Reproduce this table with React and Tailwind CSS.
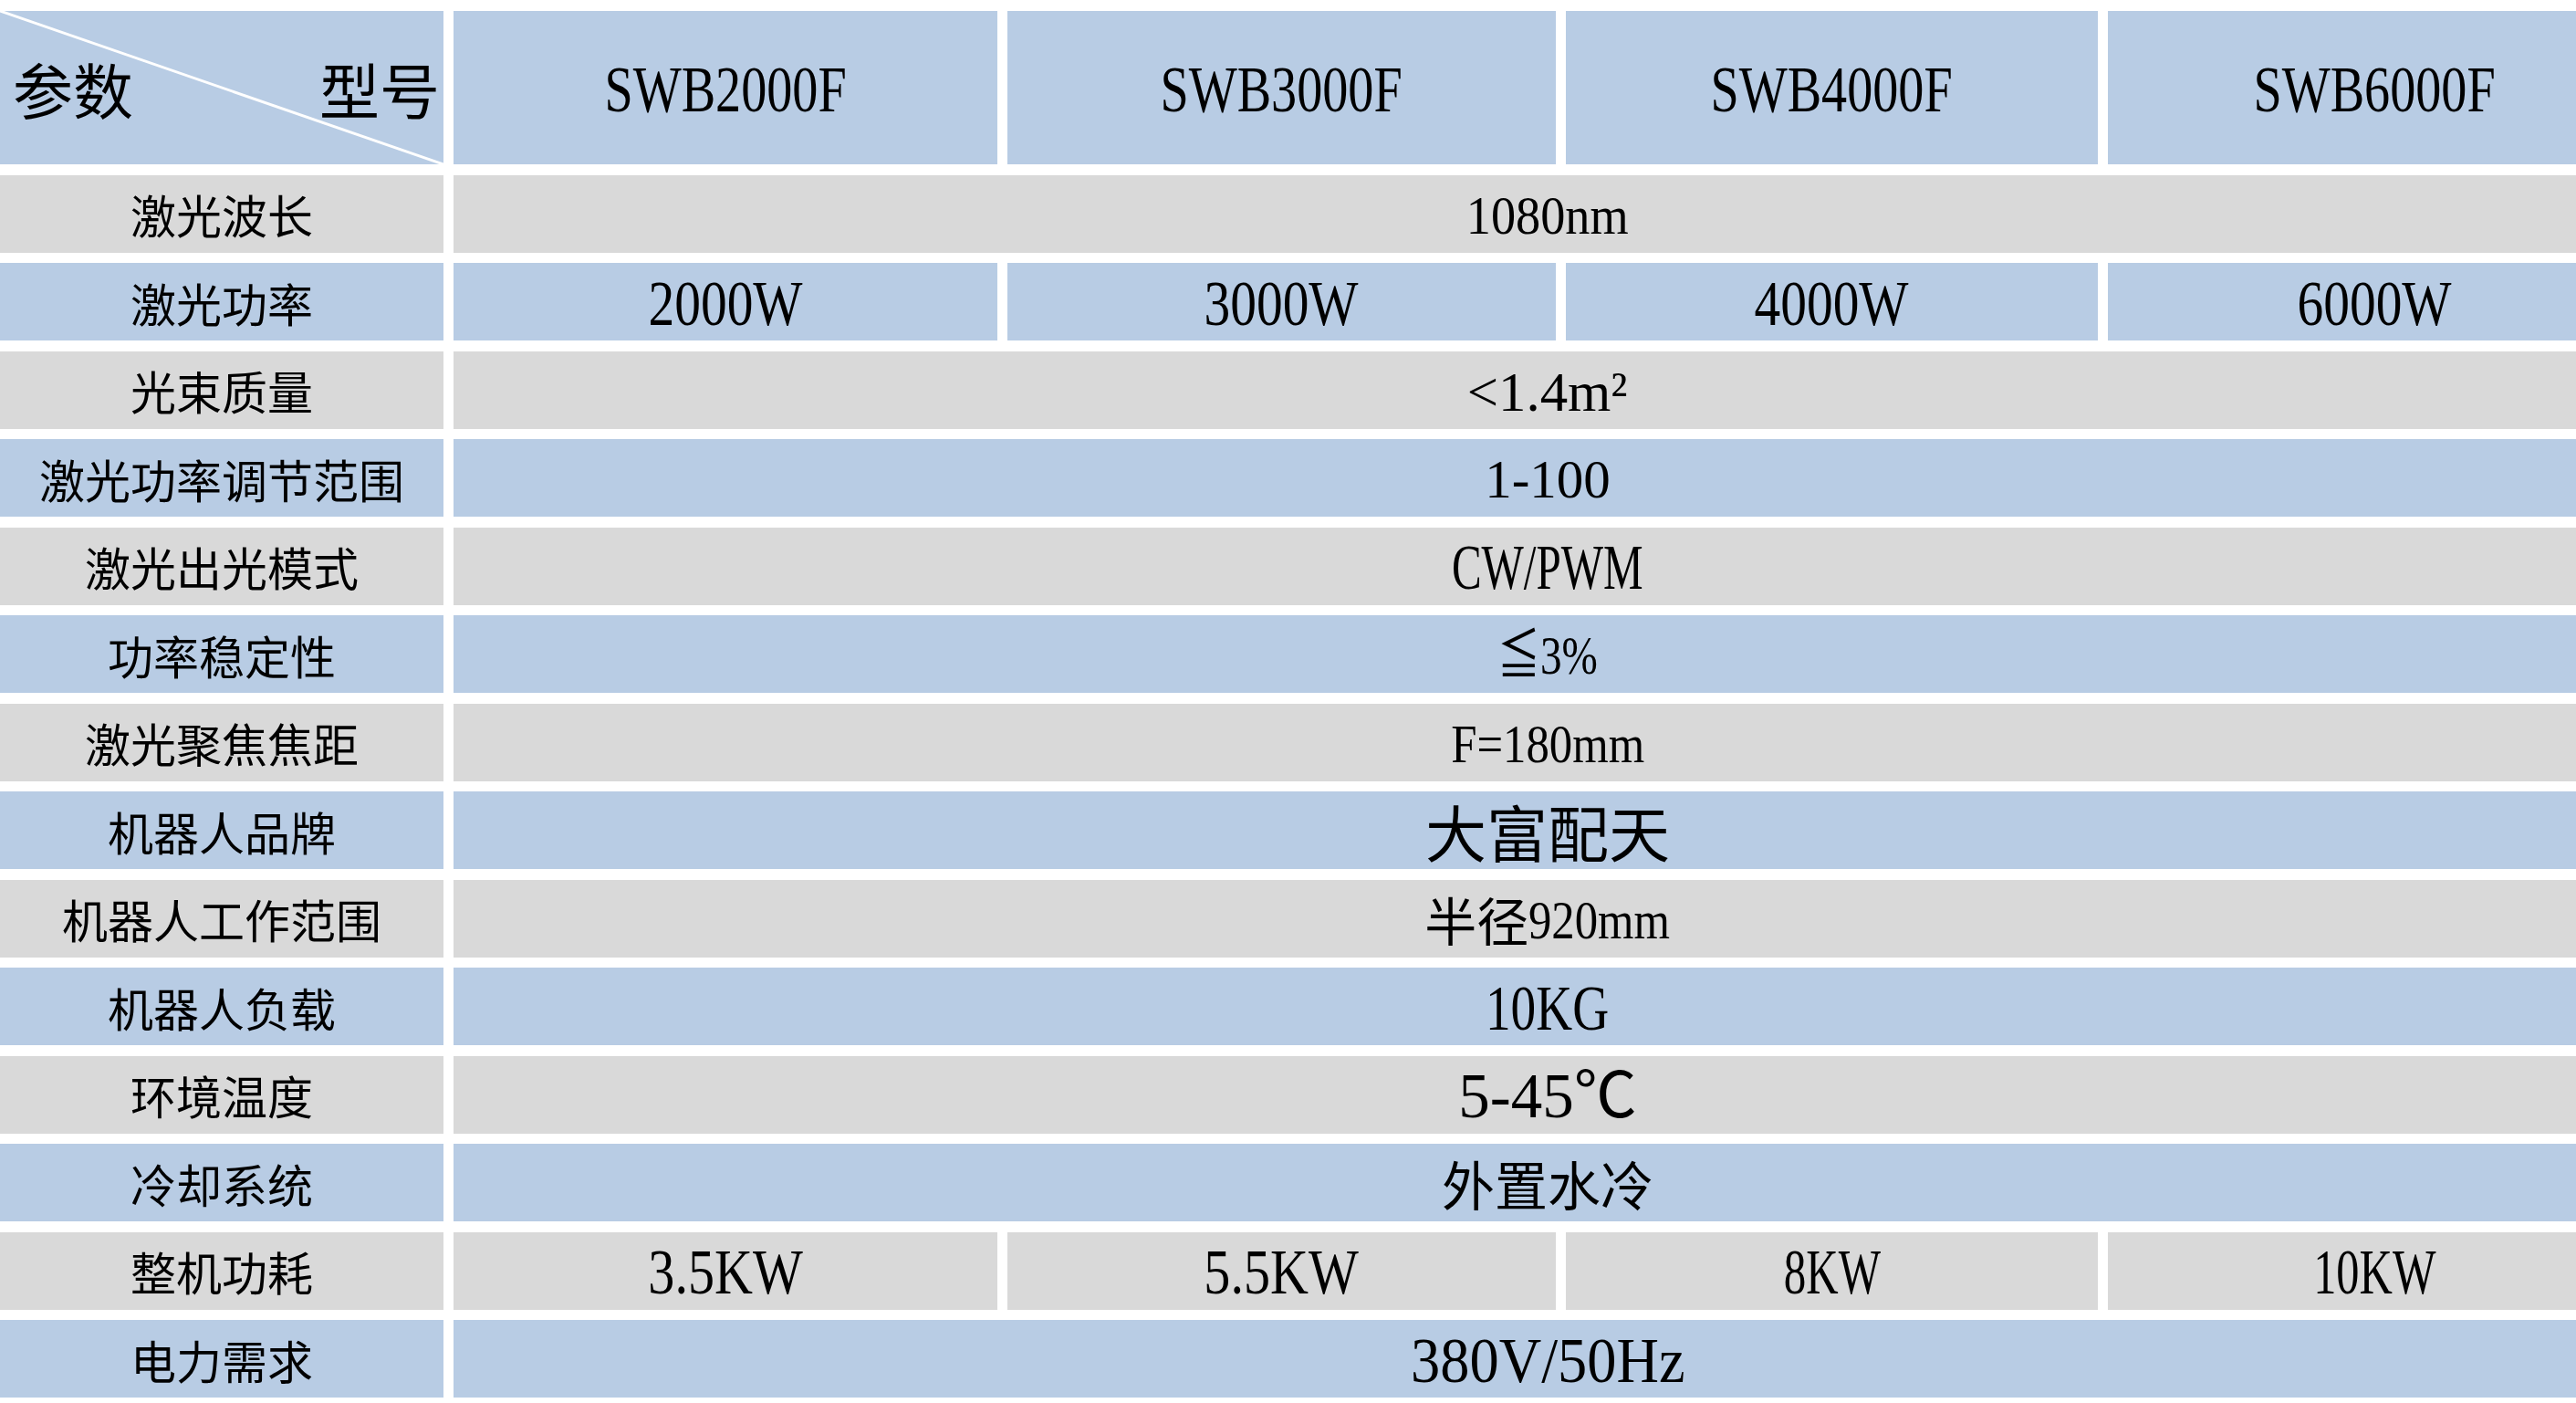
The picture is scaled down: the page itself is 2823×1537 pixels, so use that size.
import React from "react";

const serif = "font-['Liberation_Serif','Noto_Sans_CJK_SC',serif]";
const cjk = "font-['Noto_Sans_CJK_SC',sans-serif]";

function V({ c, children }) {
  return <span className={"inline-block whitespace-nowrap leading-none translate-y-[2px] " + serif + " " + c}>{children}</span>;
}

const models = ["SWB2000F", "SWB3000F", "SWB4000F", "SWB6000F"];

const rows = [
  { label: "激光波长", value: <V c="text-[59px] scale-x-[0.92]">1080nm</V> },
  {
    label: "激光功率",
    cols: [
      <V c="text-[70px] scale-x-[0.82]">2000W</V>,
      <V c="text-[70px] scale-x-[0.82]">3000W</V>,
      <V c="text-[70px] scale-x-[0.82]">4000W</V>,
      <V c="text-[70px] scale-x-[0.82]">6000W</V>,
    ],
  },
  { label: "光束质量", value: <V c="text-[62px] scale-x-[0.98]">{"<1.4m²"}</V> },
  { label: "激光功率调节范围", value: <V c="text-[59px]">1-100</V> },
  { label: "激光出光模式", value: <V c="text-[70px] scale-x-[0.7]">CW/PWM</V> },
  { label: "功率稳定性", value: <V c="text-[59px] scale-x-[0.8]">≦3%</V> },
  { label: "激光聚焦焦距", value: <V c="text-[59px] scale-x-[0.86]">F=180mm</V> },
  {
    label: "机器人品牌",
    value: <span className={"leading-none text-[67px] " + cjk}>大富配天</span>,
  },
  {
    label: "机器人工作范围",
    value: (
      <span className="flex items-center">
        <span className={"leading-none text-[57px] " + cjk}>半径</span>
        <V c="text-[59px] scale-x-[0.86] origin-left -mr-[25px]">920mm</V>
      </span>
    ),
  },
  { label: "机器人负载", value: <V c="text-[70px] scale-x-[0.79]">10KG</V> },
  { label: "环境温度", value: <V c="text-[69px]">5-45℃</V> },
  {
    label: "冷却系统",
    value: <span className={"leading-none text-[58px] " + cjk}>外置水冷</span>,
  },
  {
    label: "整机功耗",
    cols: [
      <V c="text-[70px] scale-x-[0.83]">3.5KW</V>,
      <V c="text-[70px] scale-x-[0.83]">5.5KW</V>,
      <V c="text-[70px] scale-x-[0.7]">8KW</V>,
      <V c="text-[70px] scale-x-[0.72]">10KW</V>,
    ],
  },
  { label: "电力需求", value: <V c="text-[70px] scale-x-[0.92]">380V/50Hz</V> },
];

export default function App() {
  return (
    <div className="w-[2823px] h-[1537px] overflow-hidden bg-white text-black">
      <div className="w-[2895px] pt-[12px] grid grid-cols-[486px_596px_601px_583px_585px] gap-x-[11px] gap-y-[11.5px]">
        {/* header */}
        <div className={"relative h-[168px] bg-[#b8cce4] flex items-center justify-between pl-[14px] pr-[4px] text-[66px] leading-none " + cjk}>
          <svg className="absolute inset-0 w-full h-full" viewBox="0 0 486 168" preserveAspectRatio="none">
            <line x1="0" y1="0" x2="486" y2="168" stroke="#ffffff" strokeWidth="3" />
          </svg>
          <span className="relative">参数</span>
          <span className="relative">型号</span>
        </div>
        {models.map((m) => (
          <div key={m} className="h-[168px] bg-[#b8cce4] flex items-center justify-center">
            <V c="text-[72px] scale-x-[0.78]">{m}</V>
          </div>
        ))}

        {rows.map((r, i) => {
          const bg = i % 2 === 0 ? "bg-[#d9d9d9]" : "bg-[#b8cce4]";
          return (
            <React.Fragment key={r.label}>
              <div className={"h-[85px] flex items-center justify-center " + bg}>
                <span className={"leading-none text-[50px] " + cjk}>{r.label}</span>
              </div>
              {r.cols ? (
                r.cols.map((c, j) => (
                  <div key={j} className={"h-[85px] flex items-center justify-center " + bg}>
                    {c}
                  </div>
                ))
              ) : (
                <div className={"col-span-4 h-[85px] flex items-center justify-center " + bg}>
                  {r.value}
                </div>
              )}
            </React.Fragment>
          );
        })}
      </div>
    </div>
  );
}
